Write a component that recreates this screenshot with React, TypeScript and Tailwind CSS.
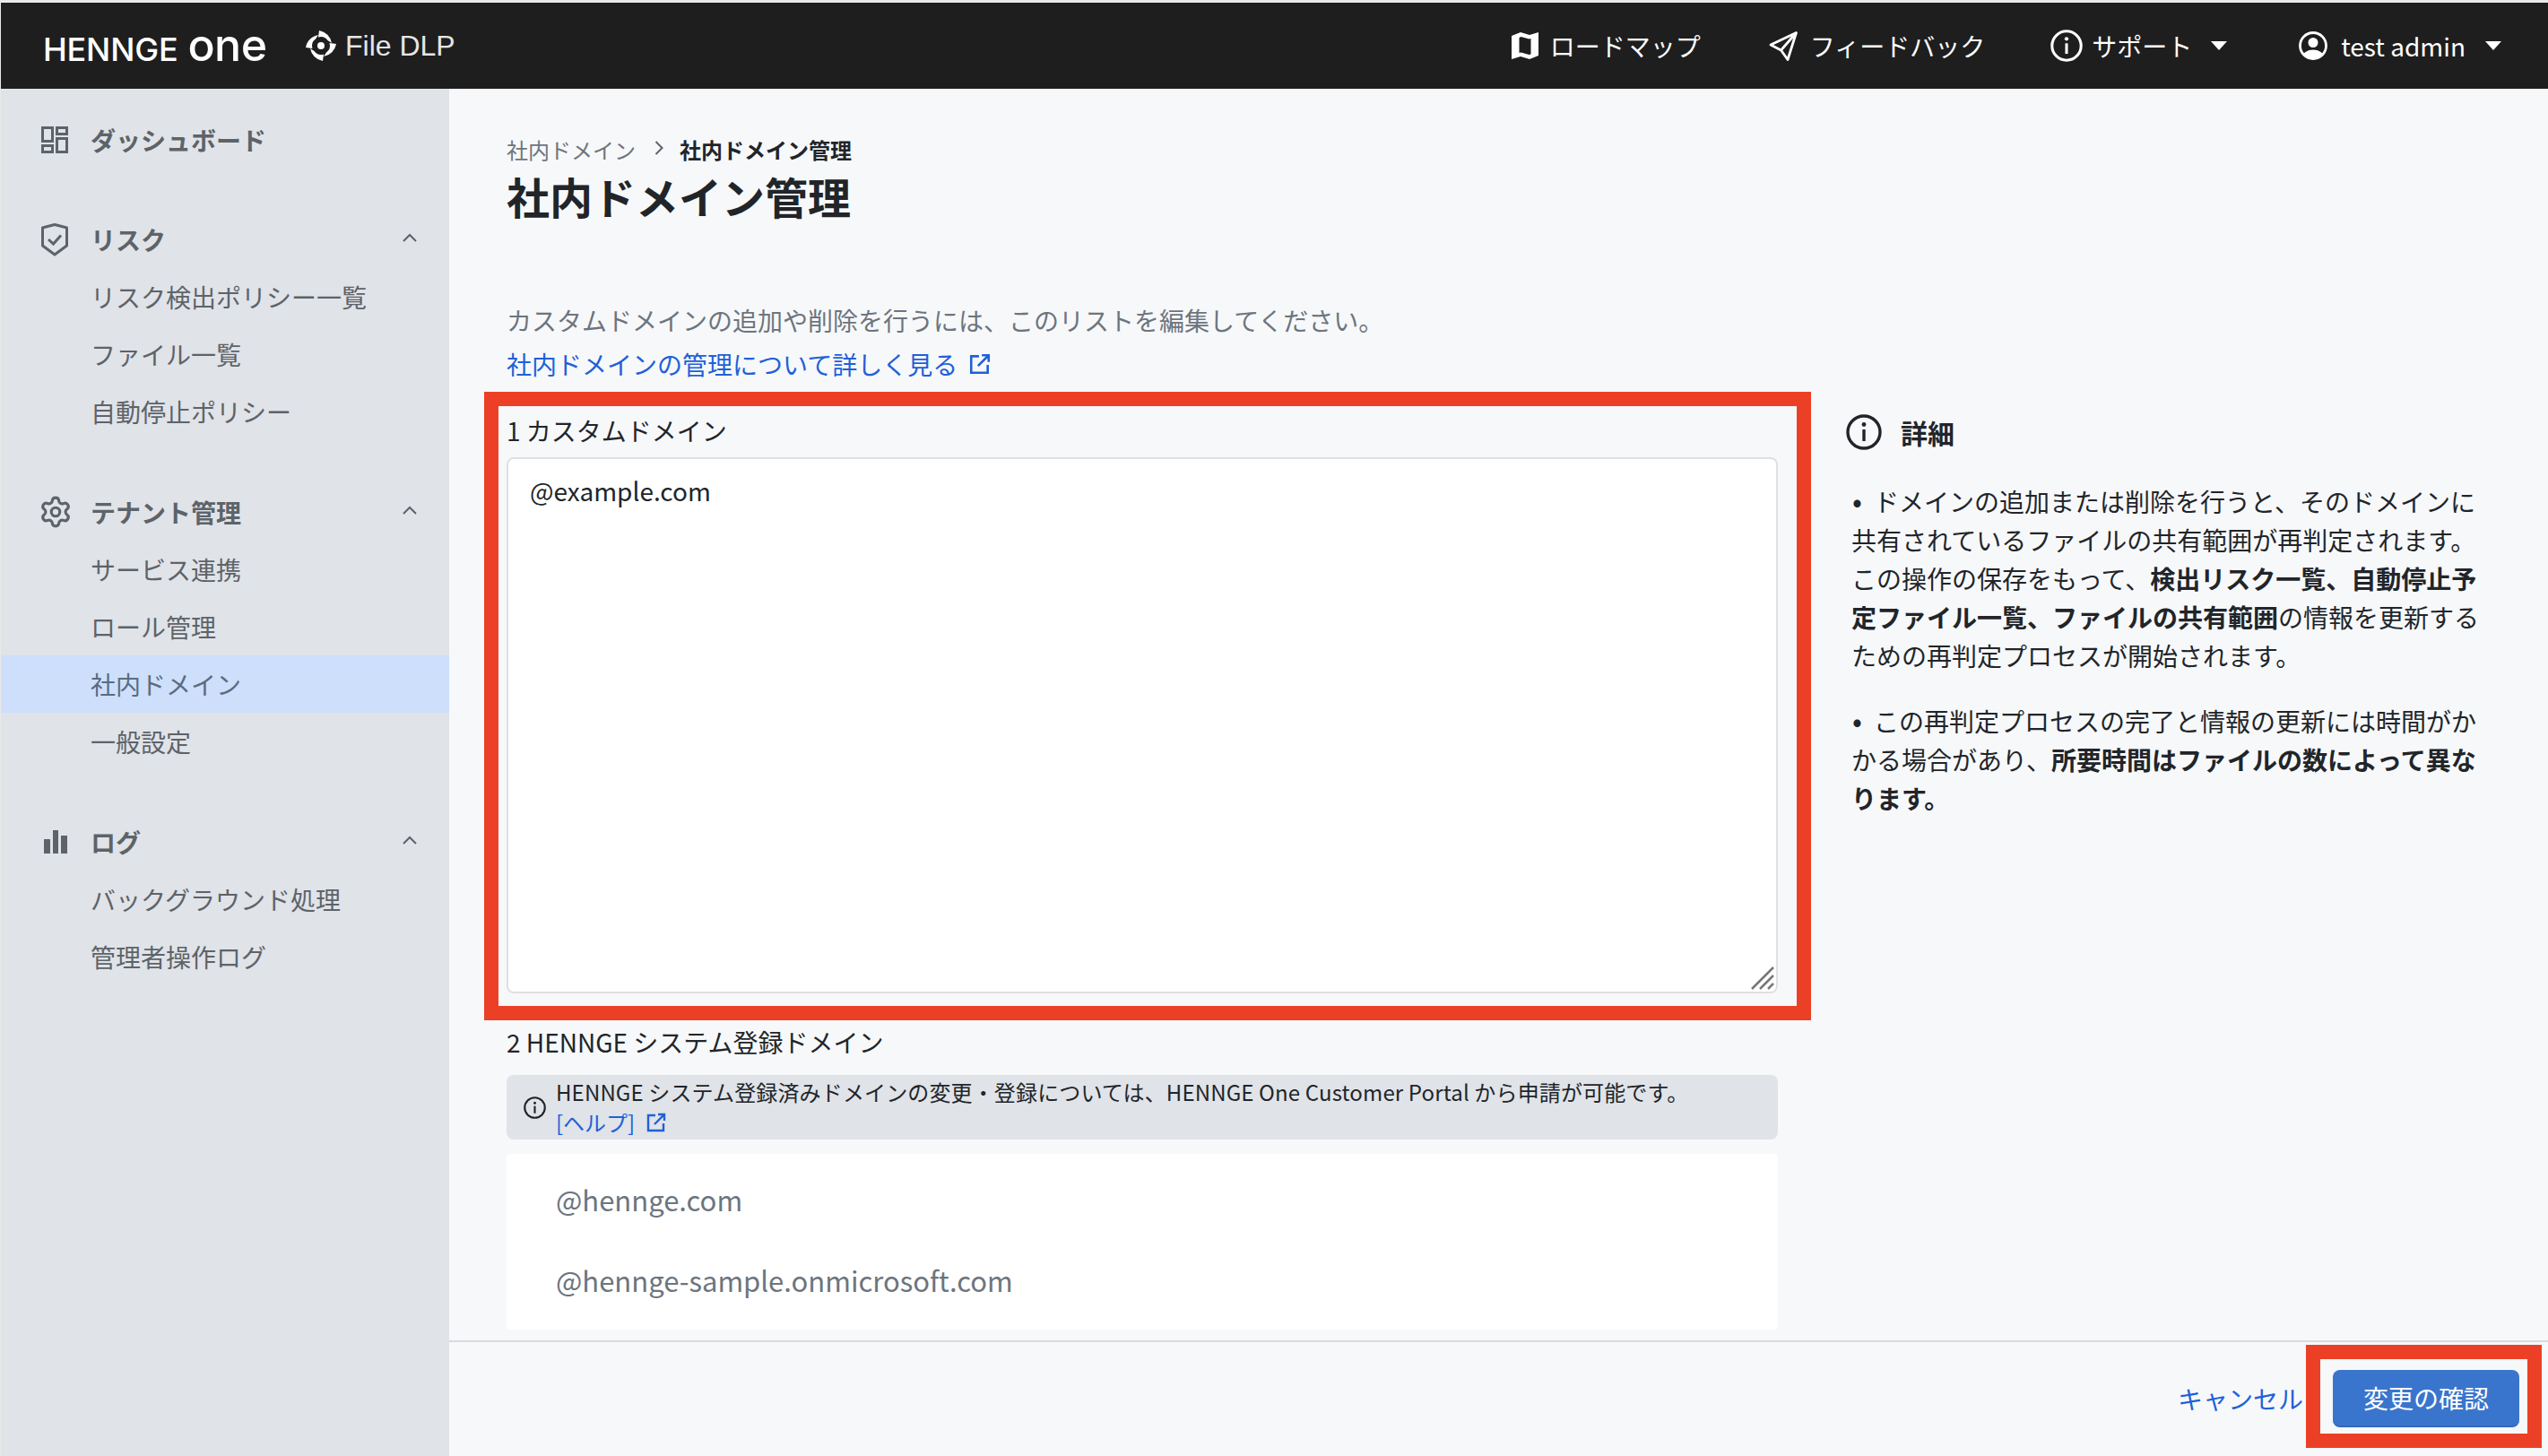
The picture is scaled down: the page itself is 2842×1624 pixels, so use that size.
import type { ReactNode } from "react";
import { Settings } from "lucide-react";

function InfoIcon({ className }: { className: string }) {
  return (
    <svg viewBox="0 0 40 40" className={className} fill="none" stroke="currentColor">
      <circle cx="20" cy="20" r="18" strokeWidth="3.4" />
      <circle cx="20" cy="11.5" r="2.4" fill="currentColor" stroke="none" />
      <path d="M20 17v13" strokeWidth="3.4" />
    </svg>
  );
}

function ExternalIcon({ className }: { className: string }) {
  return (
    <svg viewBox="0 0 24 24" className={className} fill="none" stroke="currentColor" strokeWidth="2.4">
      <path d="M11 4H3v17h17v-8" />
      <path d="M10 14 21 3M14 3h7v7" />
    </svg>
  );
}

function LogoMark() {
  const blade = "M-2 -17A17 17 0 0 1 12 -3L7.5 -6A9.5 9.5 0 0 0 -3 -9.5Z";
  return (
    <svg viewBox="-17 -17 34 34" className="h-[34px] w-[34px]" fill="#ffffff">
      <circle r="4" />
      <path d={blade} />
      <path d={blade} transform="rotate(90)" />
      <path d={blade} transform="rotate(180)" />
      <path d={blade} transform="rotate(270)" />
    </svg>
  );
}

function MapIcon() {
  return (
    <svg viewBox="0 0 30 30" className="h-[30px] w-[30px]" fill="#ffffff">
      <path fillRule="evenodd" d="M0 4 10 0l10 3 10-3v26l-10 4-10-3-10 3ZM8.500 6v17l2-.6 9 2.600 2-.6V7l-2 .6-9-2.600Z" />
    </svg>
  );
}

function SendIcon() {
  return (
    <svg viewBox="0 0 32 33" className="h-[33px] w-[32px]" fill="none" stroke="#ffffff" strokeWidth="2.8" strokeLinejoin="round">
      <path d="M30.500 1.500 2 15l11.500 6 7.500 10.500ZM13.500 21 30.500 1.500" />
    </svg>
  );
}

function UserIcon() {
  return (
    <svg viewBox="0 0 32 32" className="h-[32px] w-[32px]">
      <defs>
        <clipPath id="user-clip">
          <circle cx="16" cy="16" r="14.5" />
        </clipPath>
      </defs>
      <circle cx="16" cy="16" r="14.5" fill="none" stroke="#ffffff" strokeWidth="2.8" />
      <circle cx="16" cy="12.5" r="5.5" fill="#ffffff" />
      <ellipse cx="16" cy="29" rx="12" ry="8.5" fill="#ffffff" clipPath="url(#user-clip)" />
    </svg>
  );
}

function Caret() {
  return (
    <svg viewBox="0 0 18 10" className="h-[10px] w-[18px]" fill="#ffffff">
      <path d="M0 0h18L9 10Z" />
    </svg>
  );
}

function DashboardIcon() {
  return (
    <svg viewBox="0 0 30 30" className="h-[30px] w-[30px]" fill="none" stroke="#5d6369" strokeWidth="3">
      <path d="M1.500 1.500h11v15h-11zM17.500 1.500h11v7h-11zM1.500 21.500h11v7h-11zM17.500 13.500h11v15h-11z" />
    </svg>
  );
}

function ShieldIcon() {
  return (
    <svg viewBox="0 0 30 37" className="h-[37px] w-[30px]" fill="none" stroke="#5d6369" strokeWidth="3">
      <path d="M15 1.500 28.500 5v20L15 35 1.500 25V5Z" strokeLinejoin="round" />
      <path d="m8 18 5.500 5L22 13.500" />
    </svg>
  );
}

function ChartIcon() {
  return (
    <svg viewBox="0 0 26 26" className="ml-[3px] h-[26px] w-[26px]" fill="#5d6369">
      <path d="M0 10h7v16H0zM10 0h6v26h-6zM19 6h7v20h-7z" />
    </svg>
  );
}

function ChevronUp() {
  return (
    <svg viewBox="0 0 16 10" className="h-[10px] w-[16px]" fill="none" stroke="#5d6369" strokeWidth="2">
      <path d="m1 9 7-7 7 7" />
    </svg>
  );
}

type NavSection = {
  label: string;
  icon: ReactNode;
  children: string[];
};

const sections: NavSection[] = [
  {
    label: "リスク",
    icon: <ShieldIcon />,
    children: ["リスク検出ポリシー一覧", "ファイル一覧", "自動停止ポリシー"],
  },
  {
    label: "テナント管理",
    icon: <Settings color="#5d6369" strokeWidth={2} className="-ml-[3px] h-[38px] w-[38px]" />,
    children: ["サービス連携", "ロール管理", "社内ドメイン", "一般設定"],
  },
  {
    label: "ログ",
    icon: <ChartIcon />,
    children: ["バックグラウンド処理", "管理者操作ログ"],
  },
];

function Sidebar() {
  return (
    <aside className="w-[500px] shrink-0 bg-[#e0e3e8] pt-[25px] text-[28px] text-[#5d6369]">
      <div className="-mb-[1px] flex h-[64px] items-center font-bold">
        <span className="flex w-[100px] pl-[45px]">
          <DashboardIcon />
        </span>
        ダッシュボード
      </div>
      {sections.map((section) => (
        <div key={section.label} className="mt-[48px]">
          <div className="flex h-[64px] items-center font-bold">
            <span className="flex w-[100px] pl-[45px]">{section.icon}</span>
            <span className="flex-1">{section.label}</span>
            <span className="mb-[4px] mr-[36px]">
              <ChevronUp />
            </span>
          </div>
          {section.children.map((child) => (
            <div
              key={child}
              className={`flex h-[64px] items-center pl-[100px] ${
                child === "社内ドメイン" ? "bg-[#cddffb] text-[#5b6b80]" : ""
              }`}
            >
              {child}
            </div>
          ))}
        </div>
      ))}
    </aside>
  );
}

function Header() {
  return (
    <header className="flex h-[96px] shrink-0 items-center bg-[#1e1e1e] pl-[47px] pr-[52px] text-[28px] text-white">
      <div className="-mt-[3px] flex w-[293px] shrink-0 items-baseline leading-none text-white">
        <span className="font-['Inter',sans-serif] text-[36px] font-medium tracking-[-0.2px]">HENNGE</span>
        <span className="ml-[11px] font-['Inter',sans-serif] text-[50px] font-medium tracking-[-0.5px]">one</span>
      </div>
      <LogoMark />
      <span className="ml-[10px] font-['Liberation_Sans',sans-serif] text-[32px] text-[#e6e6e6]">File DLP</span>
      <nav className="ml-auto flex items-center">
        <span className="flex items-center gap-[13px]">
          <MapIcon />
          ロードマップ
        </span>
        <span className="ml-[76px] flex items-center gap-[14px]">
          <SendIcon />
          フィードバック
        </span>
        <span className="ml-[73px] flex items-center gap-[10px]">
          <InfoIcon className="h-[36px] w-[36px]" />
          サポート
          <span className="ml-[11px]">
            <Caret />
          </span>
        </span>
        <span className="ml-[80px] flex items-center gap-[15px]">
          <UserIcon />
          test admin
          <span className="ml-[7px]">
            <Caret />
          </span>
        </span>
      </nav>
    </header>
  );
}

function Bullet() {
  return <span className="inline-block w-[25px] pl-[1px] text-[32px] leading-none">•</span>;
}

function Details() {
  return (
    <section className="ml-[76px] w-[710px] shrink-0 pt-[35px] text-[#212529]">
      <h2 className="flex items-center gap-[21px] text-[30px] font-bold leading-[40px]">
        <InfoIcon className="h-[40px] w-[40px]" />
        詳細
      </h2>
      <div className="ml-[6px] mt-[36px] w-[704px] text-[28px] leading-[43px]">
        <p>
          <Bullet />
          ドメインの追加または削除を行うと、そのドメインに共有されているファイルの共有範囲が再判定されます。この操作の保存をもって、
          <b>検出リスク一覧、自動停止予定ファイル一覧、ファイルの共有範囲</b>
          の情報を更新するための再判定プロセスが開始されます。
        </p>
        <p className="mt-[30px]">
          <Bullet />
          この再判定プロセスの完了と情報の更新には時間がかかる場合があり、
          <b>所要時間はファイルの数によって異なります。</b>
        </p>
      </div>
    </section>
  );
}

export default function App() {
  return (
    <div className="relative flex h-screen flex-col overflow-hidden bg-[#e9e9e9] pl-px pt-[3px] font-['Noto_Sans_CJK_JP',sans-serif]">
      <Header />
      <div className="flex min-h-0 flex-1">
        <Sidebar />
        <main className="flex min-w-0 flex-1 flex-col bg-[#f7f8fa]">
          <div className="min-h-0 flex-1 overflow-hidden pl-[64px] pt-[50px]">
            <div className="flex h-[36px] items-center text-[24px] text-[#6c757d]">
              社内ドメイン
              <svg viewBox="0 0 10 16" className="mb-[4px] ml-[21px] mr-[18px] h-[16px] w-[10px]" fill="none" stroke="#5d6369" strokeWidth="2">
                <path d="m1.500 1 7 7-7 7" />
              </svg>
              <span className="font-bold text-[#212529]">社内ドメイン管理</span>
            </div>
            <h1 className="mt-[3px] text-[48px] font-bold leading-[60px] text-[#212529]">社内ドメイン管理</h1>
            <p className="mt-[88px] text-[28px] leading-[42px] text-[#6c757d]">
              カスタムドメインの追加や削除を行うには、このリストを編集してください。
            </p>
            <a className="mt-[7px] flex items-center gap-[12px] text-[28px] leading-[42px] text-[#2160d8]">
              社内ドメインの管理について詳しく見る
              <ExternalIcon className="h-[26px] w-[26px]" />
            </a>
            <div className="flex items-start">
              <div className="w-[1418px] shrink-0">
                <label className="mt-[32px] block text-[28px] leading-[42px] text-[#212529]">1 カスタムドメイン</label>
                <div className="relative mt-[9px]">
                  <textarea
                    readOnly
                    defaultValue="@example.com"
                    className="block h-[598px] w-full resize-none rounded-[8px] border-2 border-[#e0e0e0] bg-white px-[24px] py-[14px] text-[28px] leading-[42px] text-[#212529] outline-none"
                  />
                  <svg viewBox="0 0 26 26" className="absolute bottom-[4px] right-[4px] h-[26px] w-[26px]" stroke="#777777" strokeWidth="2.5">
                    <path d="M1 25 25 1M10 25 25 10M19 25l6-6" />
                  </svg>
                </div>
                <label className="mt-[33px] block text-[28px] leading-[42px] text-[#212529]">2 HENNGE システム登録ドメイン</label>
                <div className="mt-[16px] flex h-[72px] items-center rounded-[8px] bg-[#e0e3e8] pl-[19px] text-[24px] leading-[34px] text-[#212529]">
                  <InfoIcon className="h-[25px] w-[25px] shrink-0" />
                  <div className="ml-[11px]">
                    <div className="tracking-[0.14px]">HENNGE システム登録済みドメインの変更・登録については、HENNGE One Customer Portal から申請が可能です。</div>
                    <a className="flex items-center gap-[12px] text-[#2160d8]">
                      [ヘルプ]
                      <ExternalIcon className="h-[24px] w-[24px]" />
                    </a>
                  </div>
                </div>
                <div className="mt-[16px] h-[196px] rounded-[4px] bg-white pl-[55px] pt-[6px] text-[31px] text-[#6c757d]">
                  <div className="flex h-[90px] items-center">@hennge.com</div>
                  <div className="flex h-[90px] items-center">@hennge-sample.onmicrosoft.com</div>
                </div>
              </div>
              <Details />
            </div>
          </div>
          <footer className="flex h-[129px] shrink-0 items-start justify-end border-t-2 border-[#d8dae2] bg-[#f7f8fa] pr-[32px] pt-[31px] text-[28px]">
            <a className="flex h-[64px] items-center text-[#2160d8]">キャンセル</a>
            <button className="ml-[33px] h-[64px] w-[208px] rounded-[8px] border-b-2 border-[#3468b8] bg-[#3a75cd] text-white">変更の確認</button>
          </footer>
        </main>
      </div>
      {/* red annotation frames drawn on top of the screenshot */}
      <div className="pointer-events-none absolute left-[540px] top-[437px] h-[701px] w-[1480px] border-[16px] border-[#ec4026]" />
      <div className="pointer-events-none absolute left-[2572px] top-[1500px] h-[115px] w-[263px] border-[16px] border-[#ec4026]" />
    </div>
  );
}
